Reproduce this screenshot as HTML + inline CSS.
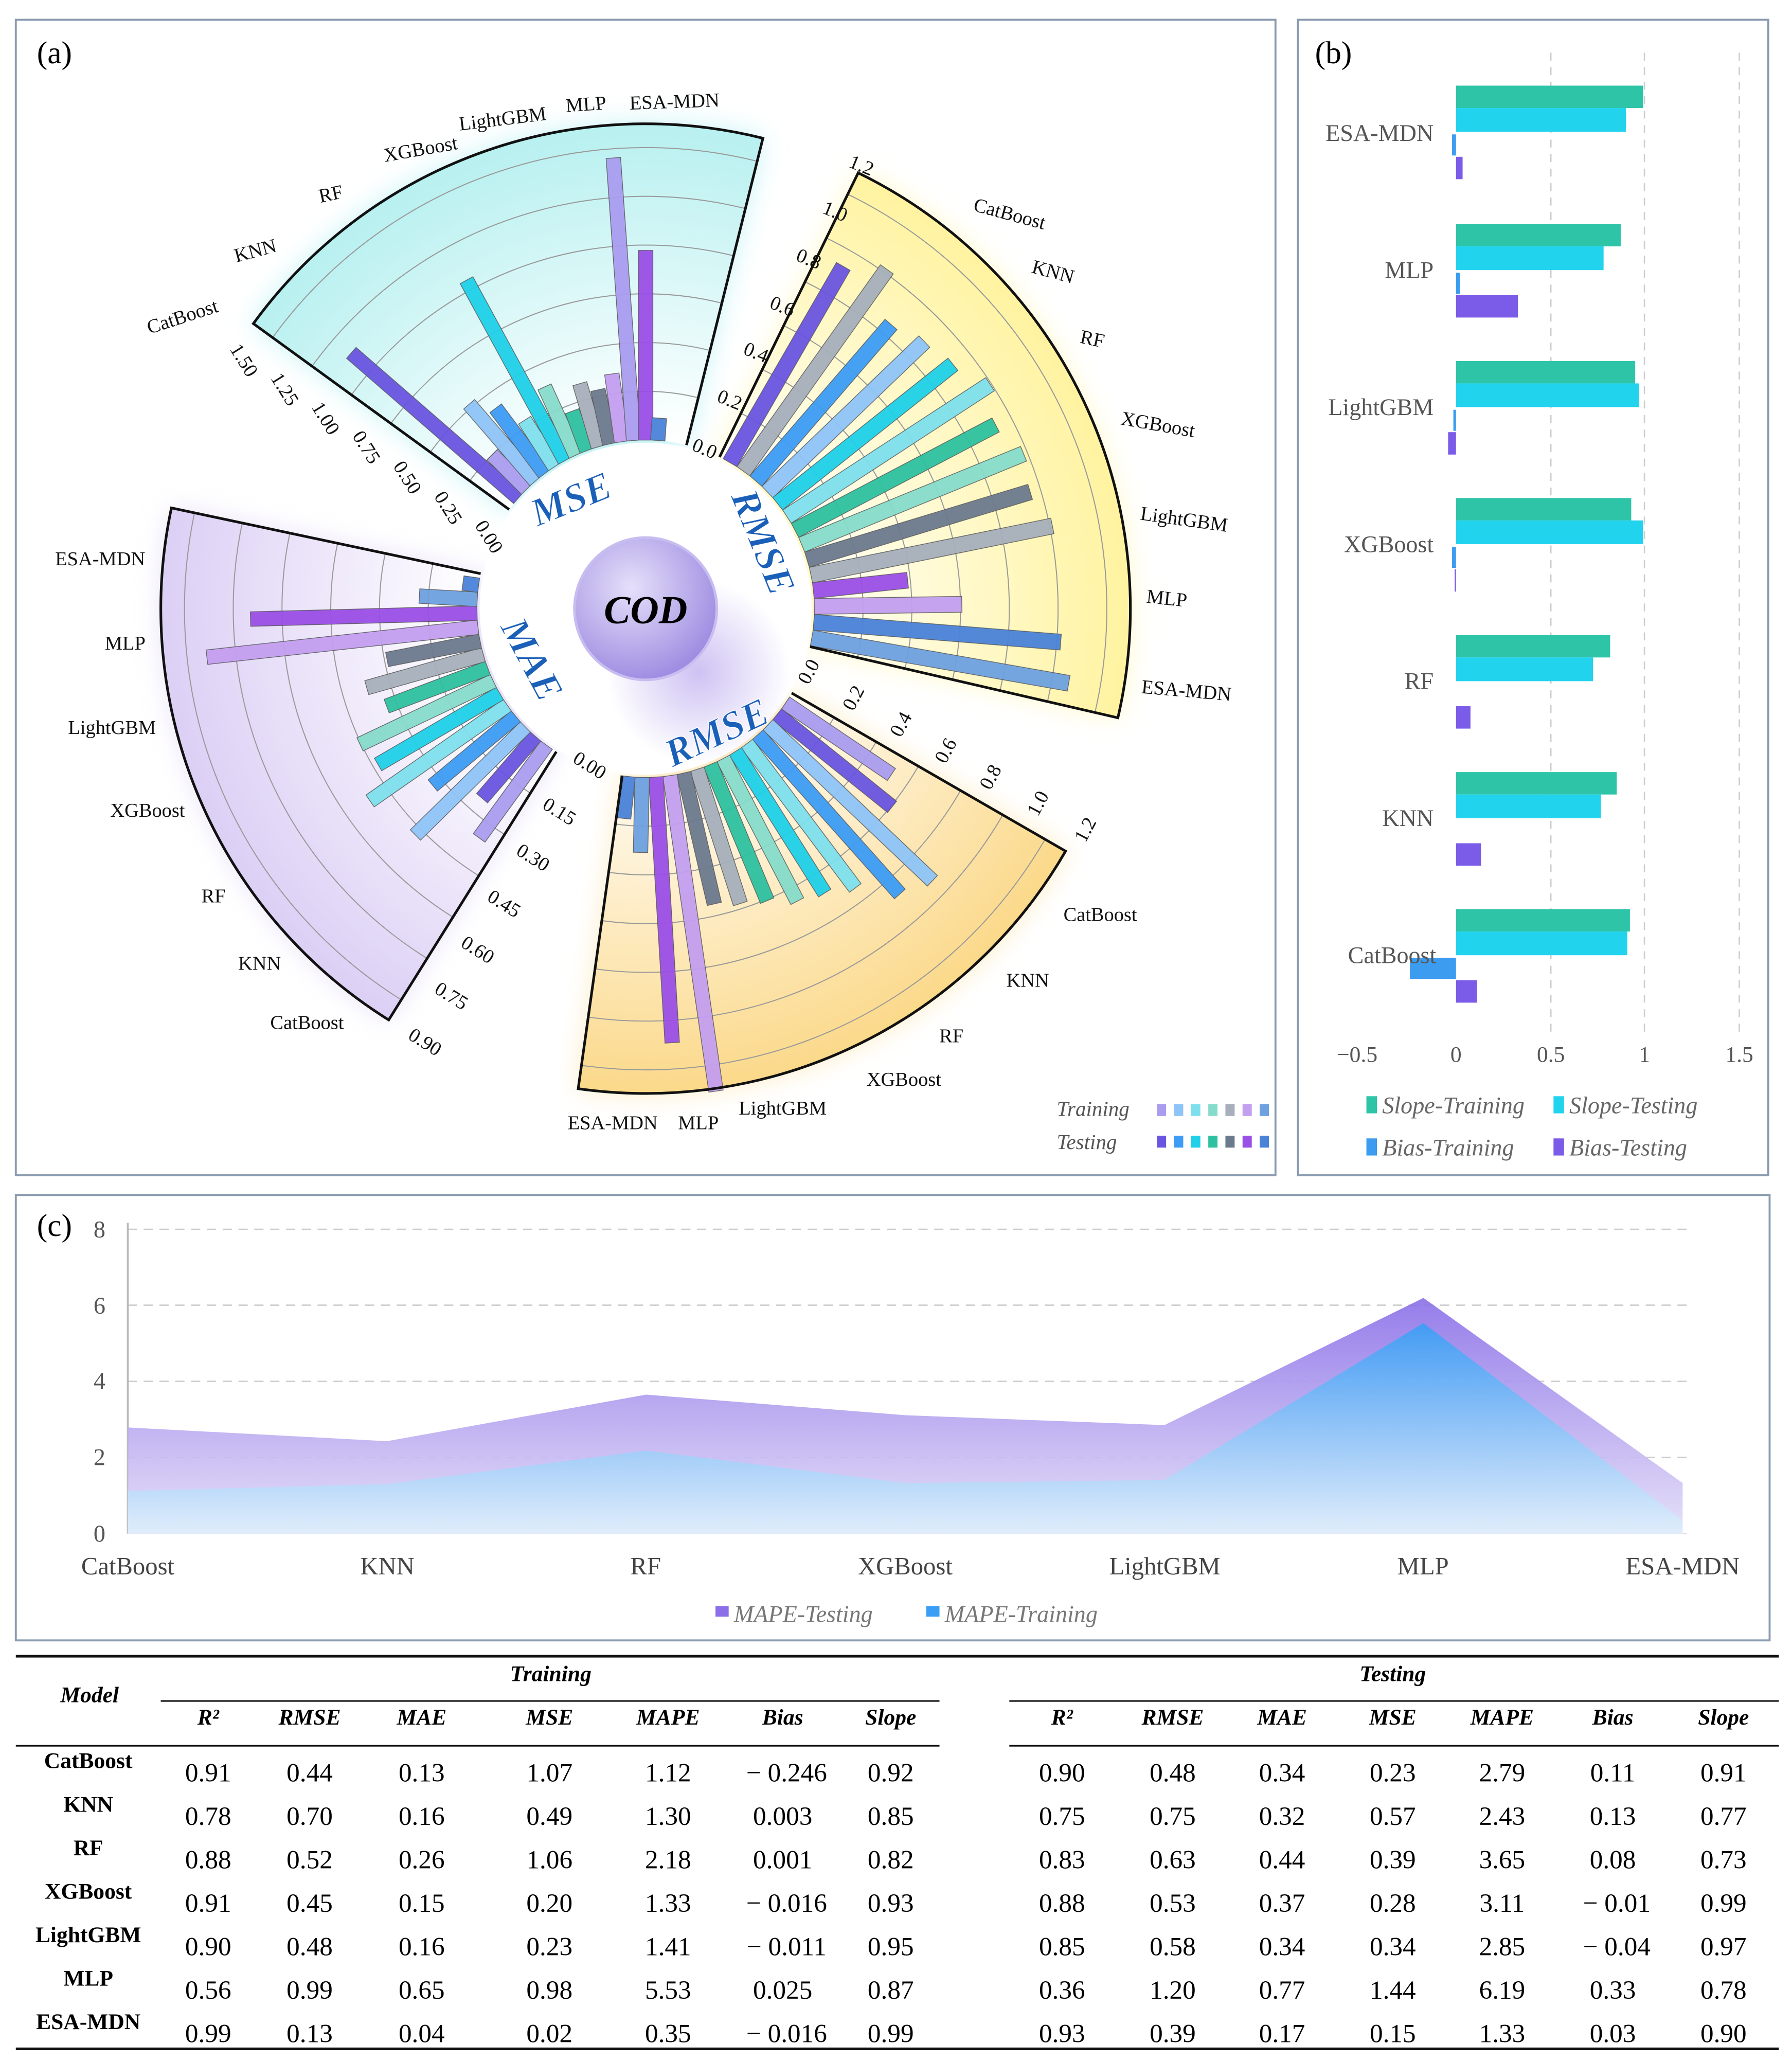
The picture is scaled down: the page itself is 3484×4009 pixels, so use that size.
<!DOCTYPE html>
<html><head><meta charset="utf-8"><style>
html,body{margin:0;padding:0;background:#fff;}
svg{display:block;}
text{font-family:"Liberation Serif",serif;}
</style></head><body>
<svg width="3484" height="4009" viewBox="0 0 1360 1565" preserveAspectRatio="none" xmlns="http://www.w3.org/2000/svg">
<defs>
<radialGradient id="gMSE" gradientUnits="userSpaceOnUse" cx="490" cy="462" r="368"><stop offset="0.35" stop-color="#ffffff"/><stop offset="1" stop-color="#b8f0f0"/></radialGradient>
<radialGradient id="gR1" gradientUnits="userSpaceOnUse" cx="490" cy="462" r="368"><stop offset="0.35" stop-color="#fffff4"/><stop offset="1" stop-color="#fff3a0"/></radialGradient>
<radialGradient id="gR2" gradientUnits="userSpaceOnUse" cx="490" cy="462" r="368"><stop offset="0.35" stop-color="#fffaf0"/><stop offset="1" stop-color="#fbd98a"/></radialGradient>
<radialGradient id="gMAE" gradientUnits="userSpaceOnUse" cx="490" cy="462" r="368"><stop offset="0.35" stop-color="#ffffff"/><stop offset="1" stop-color="#dccff5"/></radialGradient>
<radialGradient id="ball" cx="0.4" cy="0.35" r="0.7"><stop offset="0" stop-color="#e6e0fa"/><stop offset="1" stop-color="#9a88e0"/></radialGradient>
<radialGradient id="glow" cx="0.5" cy="0.5" r="0.5"><stop offset="0" stop-color="#b9a8ee" stop-opacity="0.7"/><stop offset="1" stop-color="#b9a8ee" stop-opacity="0"/></radialGradient>
<filter id="blur"><feGaussianBlur stdDeviation="10"/></filter>
<linearGradient id="aTest" x1="0" y1="0" x2="0" y2="1"><stop offset="0" stop-color="#8a6fe8"/><stop offset="1" stop-color="#e4def8"/></linearGradient>
<linearGradient id="aTrain" x1="0" y1="0" x2="0" y2="1"><stop offset="0" stop-color="#3a9ef5"/><stop offset="1" stop-color="#e0effc"/></linearGradient>
<clipPath id="cMSE"><path d="M386.4,386.7 L192.3,245.6 A368,368 0 0 1 579,104.9 L521,337.8 A128,128 0 0 0 386.4,386.7Z"/></clipPath>
<clipPath id="cR1"><path d="M546.1,346.9 L651.3,131.2 A368,368 0 0 1 848.4,544.8 L614.7,490.8 A128,128 0 0 0 546.1,346.9Z"/></clipPath>
<clipPath id="cR2"><path d="M600.8,526 L808.7,646 A368,368 0 0 1 438.8,826.3 L472.2,588.7 A128,128 0 0 0 600.8,526Z"/></clipPath>
<clipPath id="cMAE"><path d="M422.2,570.5 L295,774.1 A368,368 0 0 1 130.1,385.5 L364.8,435.4 A128,128 0 0 0 422.2,570.5Z"/></clipPath>
<g id="grid" fill="none" stroke="#9a9a9a" stroke-width="0.8"><circle cx="490" cy="462" r="165"/><circle cx="490" cy="462" r="202"/><circle cx="490" cy="462" r="239"/><circle cx="490" cy="462" r="276"/><circle cx="490" cy="462" r="313"/><circle cx="490" cy="462" r="350"/></g>
</defs>

<!-- panel borders -->
<rect x="12" y="15" width="956" height="877" fill="#fff" stroke="#8a9bb0" stroke-width="1.5"/>
<rect x="985" y="15" width="357" height="877" fill="#fff" stroke="#8a9bb0" stroke-width="1.5"/>
<rect x="12" y="907" width="1331" height="338" fill="#fff" stroke="#8a9bb0" stroke-width="1.5"/>
<text x="28" y="48" font-size="24">(a)</text>
<text x="998" y="48" font-size="24">(b)</text>
<text x="28" y="938" font-size="24">(c)</text>

<!-- glows -->
<g filter="url(#blur)" opacity="0.6">
<path d="M386.4,386.7 L192.3,245.6 A368,368 0 0 1 579,104.9 L521,337.8 Z" fill="#a0ecf0"/>
<path d="M546.1,346.9 L651.3,131.2 A368,368 0 0 1 848.4,544.8 L614.7,490.8 Z" fill="#fff5a8"/>
<path d="M600.8,526 L808.7,646 A368,368 0 0 1 438.8,826.3 L472.2,588.7 Z" fill="#fbe0a0"/>
<path d="M422.2,570.5 L295,774.1 A368,368 0 0 1 130.1,385.5 L364.8,435.4 Z" fill="#dcd0f5"/>
</g>
<!-- sectors -->
<path d="M386.4,386.7 L192.3,245.6 A368,368 0 0 1 579,104.9 L521,337.8 A128,128 0 0 0 386.4,386.7Z" fill="url(#gMSE)"/>
<path d="M546.1,346.9 L651.3,131.2 A368,368 0 0 1 848.4,544.8 L614.7,490.8 A128,128 0 0 0 546.1,346.9Z" fill="url(#gR1)"/>
<path d="M600.8,526 L808.7,646 A368,368 0 0 1 438.8,826.3 L472.2,588.7 A128,128 0 0 0 600.8,526Z" fill="url(#gR2)"/>
<path d="M422.2,570.5 L295,774.1 A368,368 0 0 1 130.1,385.5 L364.8,435.4 A128,128 0 0 0 422.2,570.5Z" fill="url(#gMAE)"/>
<use href="#grid" clip-path="url(#cMSE)"/>
<use href="#grid" clip-path="url(#cR1)"/>
<use href="#grid" clip-path="url(#cR2)"/>
<use href="#grid" clip-path="url(#cMAE)"/>

<!-- bars -->
<g transform="translate(490,462)" stroke="#555" stroke-width="0.5" opacity="0.95">
<!-- MSE -->
<rect transform="rotate(-49)" x="-5.5" y="-296" width="11" height="168" fill="#6a55e0"/>
<rect transform="rotate(-44.9)" x="-5.5" y="-165" width="11" height="37" fill="#a99cf0"/>
<rect transform="rotate(-40.8)" x="-5.5" y="-205" width="11" height="77" fill="#8fc4f8"/>
<rect transform="rotate(-36.8)" x="-5.5" y="-190" width="11" height="62" fill="#3d9cf5"/>
<rect transform="rotate(-32.7)" x="-5.5" y="-170" width="11" height="42" fill="#7ee0ec"/>
<rect transform="rotate(-28.6)" x="-5.5" y="-284" width="11" height="156" fill="#1fd0e8"/>
<rect transform="rotate(-24.5)" x="-5.5" y="-185" width="11" height="57" fill="#86dccb"/>
<rect transform="rotate(-20.4)" x="-5.5" y="-160" width="11" height="32" fill="#2ec0a0"/>
<rect transform="rotate(-16.3)" x="-5.5" y="-178" width="11" height="50" fill="#a6afbb"/>
<rect transform="rotate(-12.3)" x="-5.5" y="-170" width="11" height="42" fill="#6c7a8e"/>
<rect transform="rotate(-8.2)" x="-5.5" y="-180" width="11" height="52" fill="#c39ff0"/>
<rect transform="rotate(-4.1)" x="-5.5" y="-343" width="11" height="215" fill="#a99cf0"/>
<rect transform="rotate(0)" x="-5.5" y="-272" width="11" height="144" fill="#9a4fe6"/>
<rect transform="rotate(4.1)" x="-5.5" y="-145" width="11" height="17" fill="#4a82d8"/>
<!-- RMSE right -->
<rect transform="rotate(30)" x="-6" y="-300" width="12" height="172" fill="#6a55e0"/>
<rect transform="rotate(35.4)" x="-6" y="-316" width="12" height="188" fill="#a6afbb"/>
<rect transform="rotate(40.8)" x="-6" y="-285" width="12" height="157" fill="#3d9cf5"/>
<rect transform="rotate(46.2)" x="-6" y="-293" width="12" height="165" fill="#8fc4f8"/>
<rect transform="rotate(51.5)" x="-6" y="-298" width="12" height="170" fill="#1fd0e8"/>
<rect transform="rotate(56.9)" x="-6" y="-312" width="12" height="184" fill="#7ee0ec"/>
<rect transform="rotate(62.3)" x="-6" y="-300" width="12" height="172" fill="#2ec0a0"/>
<rect transform="rotate(67.7)" x="-6" y="-310" width="12" height="182" fill="#86dccb"/>
<rect transform="rotate(73.1)" x="-6" y="-305" width="12" height="177" fill="#6c7a8e"/>
<rect transform="rotate(78.5)" x="-6" y="-315" width="12" height="187" fill="#a6afbb"/>
<rect transform="rotate(83.8)" x="-6" y="-200" width="12" height="72" fill="#9a4fe6"/>
<rect transform="rotate(89.2)" x="-6" y="-240" width="12" height="112" fill="#c39ff0"/>
<rect transform="rotate(94.6)" x="-6" y="-316" width="12" height="188" fill="#4a82d8"/>
<rect transform="rotate(100)" x="-6" y="-326" width="12" height="198" fill="#6ea1e0"/>
<!-- RMSE bottom -->
<rect transform="rotate(124)" x="-5.5" y="-225" width="11" height="97" fill="#a99cf0"/>
<rect transform="rotate(128.8)" x="-5.5" y="-240" width="11" height="112" fill="#6a55e0"/>
<rect transform="rotate(133.5)" x="-5.5" y="-300" width="11" height="172" fill="#8fc4f8"/>
<rect transform="rotate(138.3)" x="-5.5" y="-290" width="11" height="162" fill="#3d9cf5"/>
<rect transform="rotate(143.1)" x="-5.5" y="-265" width="11" height="137" fill="#7ee0ec"/>
<rect transform="rotate(147.8)" x="-5.5" y="-255" width="11" height="127" fill="#1fd0e8"/>
<rect transform="rotate(152.6)" x="-5.5" y="-250" width="11" height="122" fill="#86dccb"/>
<rect transform="rotate(157.4)" x="-5.5" y="-240" width="11" height="112" fill="#2ec0a0"/>
<rect transform="rotate(162.2)" x="-5.5" y="-235" width="11" height="107" fill="#a6afbb"/>
<rect transform="rotate(166.9)" x="-5.5" y="-230" width="11" height="102" fill="#6c7a8e"/>
<rect transform="rotate(171.7)" x="-5.5" y="-370" width="11" height="242" fill="#c39ff0"/>
<rect transform="rotate(176.5)" x="-5.5" y="-330" width="11" height="202" fill="#9a4fe6"/>
<rect transform="rotate(181.2)" x="-5.5" y="-185" width="11" height="57" fill="#6ea1e0"/>
<rect transform="rotate(186)" x="-5.5" y="-160" width="11" height="32" fill="#4a82d8"/>
<!-- MAE -->
<rect transform="rotate(216)" x="-5.5" y="-215" width="11" height="87" fill="#a99cf0"/>
<rect transform="rotate(220.8)" x="-5.5" y="-190" width="11" height="62" fill="#6a55e0"/>
<rect transform="rotate(225.5)" x="-5.5" y="-245" width="11" height="117" fill="#8fc4f8"/>
<rect transform="rotate(230.3)" x="-5.5" y="-210" width="11" height="82" fill="#3d9cf5"/>
<rect transform="rotate(235.1)" x="-5.5" y="-255" width="11" height="127" fill="#7ee0ec"/>
<rect transform="rotate(239.8)" x="-5.5" y="-235" width="11" height="107" fill="#1fd0e8"/>
<rect transform="rotate(244.6)" x="-5.5" y="-240" width="11" height="112" fill="#86dccb"/>
<rect transform="rotate(249.4)" x="-5.5" y="-210" width="11" height="82" fill="#2ec0a0"/>
<rect transform="rotate(254.2)" x="-5.5" y="-220" width="11" height="92" fill="#a6afbb"/>
<rect transform="rotate(258.9)" x="-5.5" y="-200" width="11" height="72" fill="#6c7a8e"/>
<rect transform="rotate(263.7)" x="-5.5" y="-335" width="11" height="207" fill="#c39ff0"/>
<rect transform="rotate(268.5)" x="-5.5" y="-300" width="11" height="172" fill="#9a4fe6"/>
<rect transform="rotate(273.2)" x="-5.5" y="-172" width="11" height="44" fill="#6ea1e0"/>
<rect transform="rotate(278)" x="-5.5" y="-140" width="11" height="12" fill="#4a82d8"/>
</g>

<!-- outlines -->
<g fill="none" stroke="#111" stroke-width="2">
<path d="M386.4,386.7 L192.3,245.6 A368,368 0 0 1 579,104.9 L521,337.8"/>
<path d="M546.1,346.9 L651.3,131.2 A368,368 0 0 1 848.4,544.8 L614.7,490.8"/>
<path d="M600.8,526 L808.7,646 A368,368 0 0 1 438.8,826.3 L472.2,588.7"/>
<path d="M422.2,570.5 L295,774.1 A368,368 0 0 1 130.1,385.5 L364.8,435.4"/>
</g>

<!-- center -->
<circle cx="490" cy="462" r="126" fill="#fff"/>
<circle cx="530" cy="510" r="70" fill="url(#glow)"/>
<circle cx="490" cy="462" r="54" fill="url(#ball)" stroke="#c8bdf0" stroke-width="2"/>
<text x="490" y="473" font-size="30" font-weight="bold" font-style="italic" text-anchor="middle">COD</text>
<g font-size="30" font-weight="bold" font-style="italic" fill="#1a5fb8" text-anchor="middle" stroke="#fff" stroke-width="0.6">
<text transform="translate(437,388) rotate(-22)">MSE</text>
<text transform="translate(570,415) rotate(68)">RMSE</text>
<text transform="translate(548,565) rotate(-25)">RMSE</text>
<text transform="translate(395,505) rotate(62)">MAE</text>
</g>

<!-- model labels -->
<g font-size="15" fill="#111" text-anchor="middle">
<text transform="translate(140,245) rotate(-18)">CatBoost</text>
<text transform="translate(195,195) rotate(-15)">KNN</text>
<text transform="translate(252,152) rotate(-12)">RF</text>
<text transform="translate(320,118) rotate(-10)">XGBoost</text>
<text transform="translate(382,95) rotate(-7)">LightGBM</text>
<text transform="translate(445,84) rotate(-4)">MLP</text>
<text transform="translate(512,82) rotate(-2)">ESA-MDN</text>
<text transform="translate(765,167) rotate(15)">CatBoost</text>
<text transform="translate(798,211) rotate(15)">KNN</text>
<text transform="translate(828,262) rotate(12)">RF</text>
<text transform="translate(878,327) rotate(10)">XGBoost</text>
<text transform="translate(898,399) rotate(8)">LightGBM</text>
<text transform="translate(885,459) rotate(6)">MLP</text>
<text transform="translate(900,529) rotate(5)">ESA-MDN</text>
<text x="835" y="699">CatBoost</text>
<text x="780" y="749">KNN</text>
<text x="722" y="791">RF</text>
<text x="686" y="824">XGBoost</text>
<text x="594" y="846">LightGBM</text>
<text x="530" y="857">MLP</text>
<text x="465" y="857">ESA-MDN</text>
<text x="76" y="429">ESA-MDN</text>
<text x="95" y="493">MLP</text>
<text x="85" y="557">LightGBM</text>
<text x="112" y="620">XGBoost</text>
<text x="162" y="685">RF</text>
<text x="197" y="736">KNN</text>
<text x="233" y="781">CatBoost</text>
</g>
<!-- tick labels -->
<g font-size="15" fill="#111" text-anchor="middle">
<text transform="translate(367,410) rotate(58)">0.00</text>
<text transform="translate(336,388) rotate(58)">0.25</text>
<text transform="translate(305,365) rotate(58)">0.50</text>
<text transform="translate(274,342) rotate(58)">0.75</text>
<text transform="translate(243,320) rotate(58)">1.00</text>
<text transform="translate(212,298) rotate(58)">1.25</text>
<text transform="translate(181,276) rotate(58)">1.50</text>
<text transform="translate(533,345) rotate(22)">0.0</text>
<text transform="translate(552,308) rotate(22)">0.2</text>
<text transform="translate(572,272) rotate(22)">0.4</text>
<text transform="translate(592,237) rotate(22)">0.6</text>
<text transform="translate(612,201) rotate(22)">0.8</text>
<text transform="translate(632,165) rotate(22)">1.0</text>
<text transform="translate(652,130) rotate(22)">1.2</text>
<text transform="translate(618,512) rotate(-62)">0.0</text>
<text transform="translate(652,532) rotate(-62)">0.2</text>
<text transform="translate(688,552) rotate(-62)">0.4</text>
<text transform="translate(722,572) rotate(-62)">0.6</text>
<text transform="translate(756,592) rotate(-62)">0.8</text>
<text transform="translate(792,612) rotate(-62)">1.0</text>
<text transform="translate(828,632) rotate(-62)">1.2</text>
<text transform="translate(445,585) rotate(32)">0.00</text>
<text transform="translate(422,620) rotate(32)">0.15</text>
<text transform="translate(402,655) rotate(32)">0.30</text>
<text transform="translate(380,690) rotate(32)">0.45</text>
<text transform="translate(360,725) rotate(32)">0.60</text>
<text transform="translate(340,760) rotate(32)">0.75</text>
<text transform="translate(320,795) rotate(32)">0.90</text>
</g>
<!-- legend a -->
<g font-size="16" font-style="italic" fill="#555">
<text x="802" y="847">Training</text>
<text x="802" y="872">Testing</text>
</g>
<g>
<rect x="878" y="838" width="7" height="9" fill="#a99cf0"/><rect x="891" y="838" width="7" height="9" fill="#8fc4f8"/><rect x="904" y="838" width="7" height="9" fill="#7ee0ec"/><rect x="917" y="838" width="7" height="9" fill="#86dccb"/><rect x="930" y="838" width="7" height="9" fill="#a6afbb"/><rect x="943" y="838" width="7" height="9" fill="#c39ff0"/><rect x="956" y="838" width="7" height="9" fill="#6ea1e0"/>
<rect x="878" y="862" width="7" height="9" fill="#6a55e0"/><rect x="891" y="862" width="7" height="9" fill="#3d9cf5"/><rect x="904" y="862" width="7" height="9" fill="#1fd0e8"/><rect x="917" y="862" width="7" height="9" fill="#2ec0a0"/><rect x="930" y="862" width="7" height="9" fill="#6c7a8e"/><rect x="943" y="862" width="7" height="9" fill="#9a4fe6"/><rect x="956" y="862" width="7" height="9" fill="#4a82d8"/>
</g>

<!-- panel b -->
<g stroke="#ccc" stroke-width="1" stroke-dasharray="6,5">
<line x1="1177" y1="40" x2="1177" y2="785"/><line x1="1248" y1="40" x2="1248" y2="785"/><line x1="1320" y1="40" x2="1320" y2="785"/>
</g>
<g>
<!-- ESA c=100 -->
<rect x="1105" y="65" width="142" height="17" fill="#2ec4a8"/><rect x="1105" y="82" width="129" height="18" fill="#22d3ee"/><rect x="1102" y="102" width="3" height="16" fill="#3b9cf0"/><rect x="1105" y="119" width="5" height="17" fill="#7b5ce8"/>
<!-- MLP 205 -->
<rect x="1105" y="170" width="125" height="17" fill="#2ec4a8"/><rect x="1105" y="187" width="112" height="18" fill="#22d3ee"/><rect x="1105" y="207" width="3" height="16" fill="#3b9cf0"/><rect x="1105" y="224" width="47" height="17" fill="#7b5ce8"/>
<!-- LightGBM 309 -->
<rect x="1105" y="274" width="136" height="17" fill="#2ec4a8"/><rect x="1105" y="291" width="139" height="18" fill="#22d3ee"/><rect x="1103" y="311" width="2" height="16" fill="#3b9cf0"/><rect x="1099" y="328" width="6" height="17" fill="#7b5ce8"/>
<!-- XGBoost 413 -->
<rect x="1105" y="378" width="133" height="17" fill="#2ec4a8"/><rect x="1105" y="395" width="142" height="18" fill="#22d3ee"/><rect x="1102" y="415" width="3" height="16" fill="#3b9cf0"/><rect x="1104" y="432" width="1" height="17" fill="#7b5ce8"/>
<!-- RF 517 -->
<rect x="1105" y="482" width="117" height="17" fill="#2ec4a8"/><rect x="1105" y="499" width="104" height="18" fill="#22d3ee"/><rect x="1105" y="536" width="11" height="17" fill="#7b5ce8"/>
<!-- KNN 621 -->
<rect x="1105" y="586" width="122" height="17" fill="#2ec4a8"/><rect x="1105" y="603" width="110" height="18" fill="#22d3ee"/><rect x="1105" y="640" width="19" height="17" fill="#7b5ce8"/>
<!-- CatBoost 725 -->
<rect x="1105" y="690" width="132" height="17" fill="#2ec4a8"/><rect x="1105" y="707" width="130" height="18" fill="#22d3ee"/><rect x="1070" y="727" width="35" height="16" fill="#3b9cf0"/><rect x="1105" y="744" width="16" height="17" fill="#7b5ce8"/>
</g>
<g font-size="18" fill="#555" text-anchor="end">
<text x="1088" y="107">ESA-MDN</text><text x="1088" y="211">MLP</text><text x="1088" y="315">LightGBM</text><text x="1088" y="419">XGBoost</text><text x="1088" y="523">RF</text><text x="1088" y="627">KNN</text><text x="1090" y="731">CatBoost</text>
</g>
<g font-size="17" fill="#555" text-anchor="middle">
<text x="1030" y="806">−0.5</text><text x="1105" y="806">0</text><text x="1177" y="806">0.5</text><text x="1248" y="806">1</text><text x="1320" y="806">1.5</text>
</g>
<g font-size="18" font-style="italic" fill="#666">
<rect x="1037" y="832" width="8" height="13" fill="#2ec4a8"/><text x="1049" y="845">Slope-Training</text>
<rect x="1179" y="832" width="8" height="13" fill="#22d3ee"/><text x="1191" y="845">Slope-Testing</text>
<rect x="1037" y="864" width="8" height="13" fill="#3b9cf0"/><text x="1049" y="877">Bias-Training</text>
<rect x="1179" y="864" width="8" height="13" fill="#7b5ce8"/><text x="1191" y="877">Bias-Testing</text>
</g>

<!-- panel c -->
<g stroke="#ccc" stroke-width="1" stroke-dasharray="7,5">
<line x1="97" y1="933" x2="1280" y2="933"/><line x1="97" y1="990.6" x2="1280" y2="990.6"/><line x1="97" y1="1048.4" x2="1280" y2="1048.4"/><line x1="97" y1="1106.2" x2="1280" y2="1106.2"/>
</g>
<line x1="97" y1="928" x2="97" y2="1164" stroke="#bbb" stroke-width="1.5"/>
<line x1="97" y1="1164" x2="1280" y2="1164" stroke="#ddd" stroke-width="1"/>
<polygon points="97,1164 97,1083.4 293.7,1093.8 490.3,1058.5 687,1074.1 883.7,1081.6 1080.3,985.1 1277,1125.6 1277,1164" fill="url(#aTest)" opacity="0.9"/>
<polygon points="97,1164 97,1131.6 293.7,1126.4 490.3,1101 687,1125.6 883.7,1123.3 1080.3,1004.2 1277,1153.9 1277,1164" fill="url(#aTrain)" opacity="0.9"/>
<g font-size="18" fill="#555" text-anchor="end">
<text x="80" y="1170">0</text><text x="80" y="1112">2</text><text x="80" y="1054">4</text><text x="80" y="997">6</text><text x="80" y="939">8</text>
</g>
<g font-size="19" fill="#444" text-anchor="middle">
<text x="97" y="1195">CatBoost</text><text x="294" y="1195">KNN</text><text x="490" y="1195">RF</text><text x="687" y="1195">XGBoost</text><text x="884" y="1195">LightGBM</text><text x="1080" y="1195">MLP</text><text x="1277" y="1195">ESA-MDN</text>
</g>
<g font-size="18" font-style="italic" fill="#777">
<rect x="543" y="1219" width="10" height="8" fill="#8a6fe8"/><text x="557" y="1231">MAPE-Testing</text>
<rect x="703" y="1219" width="10" height="8" fill="#3a9ef5"/><text x="717" y="1231">MAPE-Training</text>
</g>

<!-- table -->
<g stroke="#111">
<line x1="12" y1="1257" x2="1350" y2="1257" stroke-width="2"/>
<line x1="122" y1="1291" x2="713" y2="1291" stroke-width="1.2"/>
<line x1="766" y1="1291" x2="1350" y2="1291" stroke-width="1.2"/>
<line x1="12" y1="1325" x2="713" y2="1325" stroke-width="1.2"/>
<line x1="766" y1="1325" x2="1350" y2="1325" stroke-width="1.2"/>
<line x1="12" y1="1555" x2="1350" y2="1555" stroke-width="2"/>
</g>
<g font-size="17" font-weight="bold" font-style="italic" text-anchor="middle">
<text x="68" y="1292">Model</text>
<text x="418" y="1276">Training</text>
<text x="1057" y="1276">Testing</text>
<text x="158" y="1309">R²</text><text x="235" y="1309">RMSE</text><text x="320" y="1309">MAE</text><text x="417" y="1309">MSE</text><text x="507" y="1309">MAPE</text><text x="594" y="1309">Bias</text><text x="676" y="1309">Slope</text>
<text x="806" y="1309">R²</text><text x="890" y="1309">RMSE</text><text x="973" y="1309">MAE</text><text x="1057" y="1309">MSE</text><text x="1140" y="1309">MAPE</text><text x="1224" y="1309">Bias</text><text x="1308" y="1309">Slope</text>
</g>
<g font-size="17" font-weight="bold" text-anchor="middle">
<text x="67" y="1342">CatBoost</text><text x="67" y="1375">KNN</text><text x="67" y="1408">RF</text><text x="67" y="1441">XGBoost</text><text x="67" y="1474">LightGBM</text><text x="67" y="1507">MLP</text><text x="67" y="1540">ESA-MDN</text>
</g>
<g font-size="20" text-anchor="middle">
<text y="1352"><tspan x="158">0.91</tspan><tspan x="235">0.44</tspan><tspan x="320">0.13</tspan><tspan x="417">1.07</tspan><tspan x="507">1.12</tspan><tspan x="597">− 0.246</tspan><tspan x="676">0.92</tspan><tspan x="806">0.90</tspan><tspan x="890">0.48</tspan><tspan x="973">0.34</tspan><tspan x="1057">0.23</tspan><tspan x="1140">2.79</tspan><tspan x="1224">0.11</tspan><tspan x="1308">0.91</tspan></text>
<text y="1385"><tspan x="158">0.78</tspan><tspan x="235">0.70</tspan><tspan x="320">0.16</tspan><tspan x="417">0.49</tspan><tspan x="507">1.30</tspan><tspan x="594">0.003</tspan><tspan x="676">0.85</tspan><tspan x="806">0.75</tspan><tspan x="890">0.75</tspan><tspan x="973">0.32</tspan><tspan x="1057">0.57</tspan><tspan x="1140">2.43</tspan><tspan x="1224">0.13</tspan><tspan x="1308">0.77</tspan></text>
<text y="1418"><tspan x="158">0.88</tspan><tspan x="235">0.52</tspan><tspan x="320">0.26</tspan><tspan x="417">1.06</tspan><tspan x="507">2.18</tspan><tspan x="594">0.001</tspan><tspan x="676">0.82</tspan><tspan x="806">0.83</tspan><tspan x="890">0.63</tspan><tspan x="973">0.44</tspan><tspan x="1057">0.39</tspan><tspan x="1140">3.65</tspan><tspan x="1224">0.08</tspan><tspan x="1308">0.73</tspan></text>
<text y="1451"><tspan x="158">0.91</tspan><tspan x="235">0.45</tspan><tspan x="320">0.15</tspan><tspan x="417">0.20</tspan><tspan x="507">1.33</tspan><tspan x="597">− 0.016</tspan><tspan x="676">0.93</tspan><tspan x="806">0.88</tspan><tspan x="890">0.53</tspan><tspan x="973">0.37</tspan><tspan x="1057">0.28</tspan><tspan x="1140">3.11</tspan><tspan x="1227">− 0.01</tspan><tspan x="1308">0.99</tspan></text>
<text y="1484"><tspan x="158">0.90</tspan><tspan x="235">0.48</tspan><tspan x="320">0.16</tspan><tspan x="417">0.23</tspan><tspan x="507">1.41</tspan><tspan x="597">− 0.011</tspan><tspan x="676">0.95</tspan><tspan x="806">0.85</tspan><tspan x="890">0.58</tspan><tspan x="973">0.34</tspan><tspan x="1057">0.34</tspan><tspan x="1140">2.85</tspan><tspan x="1227">− 0.04</tspan><tspan x="1308">0.97</tspan></text>
<text y="1517"><tspan x="158">0.56</tspan><tspan x="235">0.99</tspan><tspan x="320">0.65</tspan><tspan x="417">0.98</tspan><tspan x="507">5.53</tspan><tspan x="594">0.025</tspan><tspan x="676">0.87</tspan><tspan x="806">0.36</tspan><tspan x="890">1.20</tspan><tspan x="973">0.77</tspan><tspan x="1057">1.44</tspan><tspan x="1140">6.19</tspan><tspan x="1224">0.33</tspan><tspan x="1308">0.78</tspan></text>
<text y="1550"><tspan x="158">0.99</tspan><tspan x="235">0.13</tspan><tspan x="320">0.04</tspan><tspan x="417">0.02</tspan><tspan x="507">0.35</tspan><tspan x="597">− 0.016</tspan><tspan x="676">0.99</tspan><tspan x="806">0.93</tspan><tspan x="890">0.39</tspan><tspan x="973">0.17</tspan><tspan x="1057">0.15</tspan><tspan x="1140">1.33</tspan><tspan x="1224">0.03</tspan><tspan x="1308">0.90</tspan></text>
</g>
</svg>
</body></html>
